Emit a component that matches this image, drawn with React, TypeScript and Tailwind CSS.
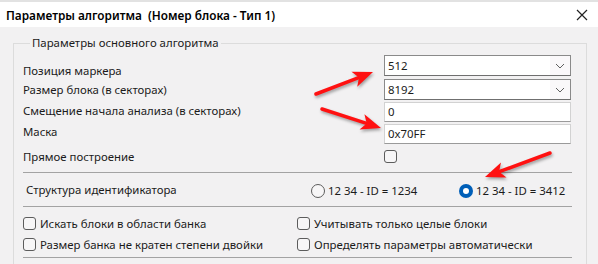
import React from "react";

const FONT = "font-['Noto_Sans','Liberation_Sans',sans-serif]";

function Chevron() {
  return (
    <svg width="10" height="6" viewBox="0 0 10 6" className="text-[#606060]">
      <path d="M1 1l4 4 4-4" fill="none" stroke="currentColor" strokeWidth="1" />
    </svg>
  );
}

function Combo({ value, className = "" }: { value: string; className?: string }) {
  return (
    <div
      className={`flex h-[21px] items-center border border-[#8a8a8a] border-b-[#6f6f6f] bg-white ${className}`}
    >
      <span className="flex-1 pl-[3px]">{value}</span>
      <span className="flex h-full w-[20px] items-center justify-center bg-[#faf8fa]">
        <Chevron />
      </span>
    </div>
  );
}

function TextBox({ value, className = "" }: { value: string; className?: string }) {
  return (
    <div
      className={`flex h-[20px] items-center border border-[#d2d2d2] border-b-[#9a9a9a] bg-white pl-[3px] ${className}`}
    >
      {value}
    </div>
  );
}

function Check({ label }: { label?: string }) {
  return (
    <div className="flex h-[21px] items-center gap-[4px]">
      <span className="h-[13px] w-[13px] rounded-[3px] border border-[#5c5c5c] bg-[#f7f6f7]" />
      {label && <span>{label}</span>}
    </div>
  );
}

function Radio({ label, checked }: { label: string; checked?: boolean }) {
  return (
    <div className="flex items-center gap-[3px]">
      {checked ? (
        <span className="flex h-[14px] w-[14px] items-center justify-center rounded-full bg-[#005fb8]">
          <span className="h-[6px] w-[6px] rounded-full bg-white" />
        </span>
      ) : (
        <span className="h-[14px] w-[14px] rounded-full border border-[#5c5c5c] bg-[#f7f6f7]" />
      )}
      <span>{label}</span>
    </div>
  );
}

function Arrow({ x1, y1, x2, y2 }: { x1: number; y1: number; x2: number; y2: number }) {
  const dx = x2 - x1;
  const dy = y2 - y1;
  const len = Math.hypot(dx, dy);
  const ux = dx / len;
  const uy = dy / len;
  const hl = 20;
  const hw = 8;
  const bx = x2 - ux * hl;
  const by = y2 - uy * hl;
  const head = `${x2},${y2} ${bx - uy * hw},${by + ux * hw} ${bx + ux * 5},${by + uy * 5} ${bx + uy * hw},${by - ux * hw}`;
  return (
    <g>
      <line x1={x1} y1={y1} x2={bx + ux * 4} y2={by + uy * 4} stroke="#ff1111" strokeWidth="3.5" strokeLinecap="round" />
      <polygon points={head} fill="#ff1111" />
    </g>
  );
}

export default function App() {
  return (
    <div className={`relative h-[264px] w-[598px] overflow-hidden bg-[#f2f1f2] text-[11.4px] leading-[16px] text-[#1b1b1b] ${FONT}`}>
      <div className="h-[2px] bg-[#e2e2e2]" />
      <div className="flex h-[25px] items-center justify-between bg-white pl-[6px] pr-[10px]">
        <span className="whitespace-pre text-[11.8px] font-semibold text-black">Параметры алгоритма  (Номер блока - Тип 1)</span>
        <svg width="12" height="12" viewBox="0 0 12 12">
          <path d="M1 1l10 10M11 1L1 11" stroke="#222" strokeWidth="1.2" />
        </svg>
      </div>

      <fieldset className="ml-[13px] mt-[8px] w-[574px] border border-[#dcdcdc] pl-[9px] pr-[14px]">
        <legend className="ml-[7px] px-[2px]">Параметры основного алгоритма</legend>

        <div className="flex pt-[4px]">
          <div className="flex w-[361px] flex-col">
            <span className="mt-[8px]">Позиция маркера</span>
            <span className="mt-[3px]">Размер блока (в секторах)</span>
            <span className="mt-[5px]">Смещение начала анализа (в секторах)</span>
            <span className="mt-[5px]">Маска</span>
            <span className="mt-[9px]">Прямое построение</span>
          </div>
          <div className="flex w-[187px] flex-col">
            <Combo value="512" />
            <Combo value="8192" className="mt-[3px]" />
            <TextBox value="0" className="mt-[2px]" />
            <TextBox value="0x70FF" className="mt-[2px]" />
            <span className="mt-[6px] h-[13px] w-[13px] rounded-[3px] border border-[#5c5c5c] bg-[#f7f6f7]" />
          </div>
        </div>

        <div className="mt-[7px] h-px bg-[#a3a3a3]" />
        <div className="flex h-[33px] items-center">
          <span className="w-[288px] pl-[3px]">Структура идентификатора</span>
          <div className="flex pt-[3px]">
            <div className="w-[148px]">
              <Radio label="12 34 - ID = 1234" />
            </div>
            <Radio label="12 34 - ID = 3412" checked />
          </div>
        </div>
        <div className="h-px bg-[#a3a3a3]" />

        <div className="grid grid-cols-[274px_1fr] pt-[6px]">
          <Check label="Искать блоки в области банка" />
          <Check label="Учитывать только целые блоки" />
          <Check label="Размер банка не кратен степени двойки" />
          <Check label="Определять параметры автоматически" />
        </div>
        <div className="mt-[2px] h-px bg-[#a3a3a3]" />
        <div className="h-[20px]" />
      </fieldset>

      <svg
        className="pointer-events-none absolute left-0 top-0"
        width="598"
        height="264"
        style={{ filter: "drop-shadow(1px 2px 1.5px rgba(0,0,0,0.35))" }}
      >
        <Arrow x1={316} y1={94} x2={373} y2={72} />
        <Arrow x1={322} y1={109} x2={381} y2={128} />
        <Arrow x1={550} y1={153} x2={485} y2={177} />
      </svg>
    </div>
  );
}
